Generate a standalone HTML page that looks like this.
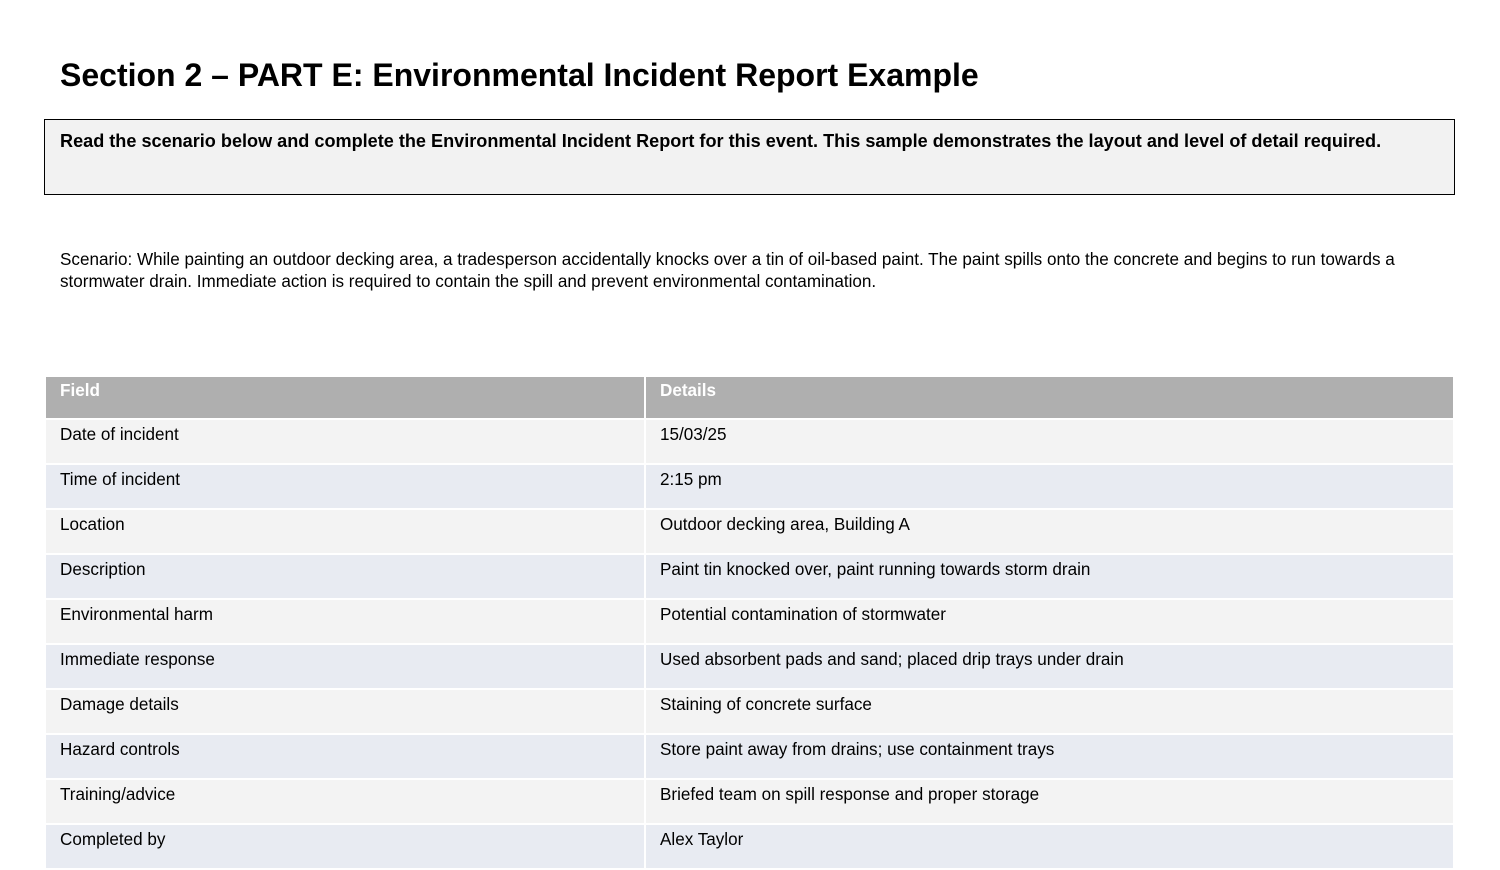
<!DOCTYPE html>
<html><head><meta charset="utf-8"><style>
body{margin:0;width:1500px;height:844px;overflow:hidden;background:#fff;font-family:"Liberation Sans",Arial,sans-serif;color:#000;position:relative}
.t{position:absolute;left:60px;top:57px;font-size:32px;font-weight:bold;white-space:nowrap}
.box{position:absolute;left:44px;top:119px;width:1409px;height:74px;border:1px solid #000;background:#f2f2f2}
.box div{position:absolute;left:15px;top:11px;font-size:18.1px;font-weight:bold;white-space:nowrap}
.sc{position:absolute;left:60px;top:249px;width:1390px;font-size:17.1px;line-height:22px}
table{position:absolute;left:44px;top:375px;width:1411px;border-collapse:collapse;table-layout:fixed}
td{border:2px solid #fff;height:38px;box-sizing:content-box;line-height:20px;vertical-align:top;padding:5px 14px 0;font-size:17.1px;white-space:nowrap;overflow:hidden}
tr.h td{background:#afafaf;color:#fff;font-weight:bold;height:37px;padding-top:4px}
tr:nth-child(even) td{background:#f3f3f3}
tr:nth-child(odd):not(.h) td{background:#e8ebf2}
</style></head><body>
<div class="t">Section 2 – PART E: Environmental Incident Report Example</div>
<div class="box"><div>Read the scenario below and complete the Environmental Incident Report for this event. This sample demonstrates the layout and level of detail required.</div></div>
<div class="sc">Scenario: While painting an outdoor decking area, a tradesperson accidentally knocks over a tin of oil-based paint. The paint spills onto the concrete and begins to run towards a<br>stormwater drain. Immediate action is required to contain the spill and prevent environmental contamination.</div>
<table>
<colgroup><col style="width:600px"><col></colgroup>
<tr class="h"><td>Field</td><td>Details</td></tr>
<tr><td>Date of incident</td><td>15/03/25</td></tr>
<tr><td>Time of incident</td><td>2:15 pm</td></tr>
<tr><td>Location</td><td>Outdoor decking area, Building A</td></tr>
<tr><td>Description</td><td>Paint tin knocked over, paint running towards storm drain</td></tr>
<tr><td>Environmental harm</td><td>Potential contamination of stormwater</td></tr>
<tr><td>Immediate response</td><td>Used absorbent pads and sand; placed drip trays under drain</td></tr>
<tr><td>Damage details</td><td>Staining of concrete surface</td></tr>
<tr><td>Hazard controls</td><td>Store paint away from drains; use containment trays</td></tr>
<tr><td>Training/advice</td><td>Briefed team on spill response and proper storage</td></tr>
<tr><td>Completed by</td><td>Alex Taylor</td></tr>
</table>
</body></html>
